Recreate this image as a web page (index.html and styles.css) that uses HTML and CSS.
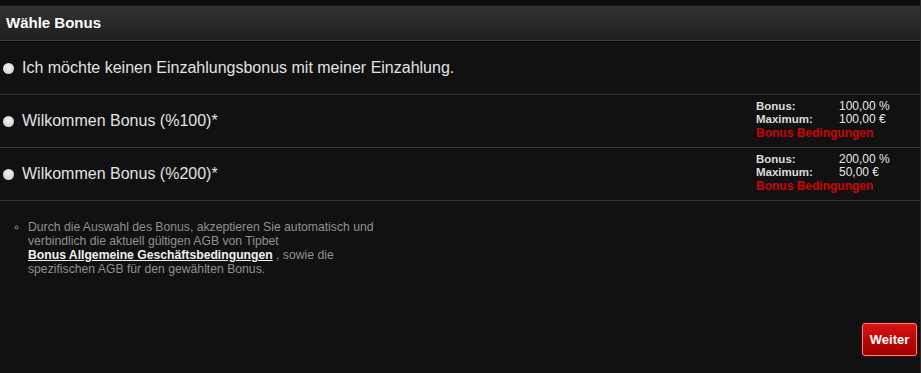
FILE: index.html
```html
<!DOCTYPE html>
<html lang="de">
<head>
<meta charset="utf-8">
<link rel="stylesheet" href="styles.css">
</head>
<body>
<div class="page">
  <div class="topband"></div>
  <div class="header">Wähle Bonus</div>
  <div class="options">
    <div class="row row-first">
      <span class="radio"></span>
      <span class="label">Ich möchte keinen Einzahlungsbonus mit meiner Einzahlung.</span>
    </div>
    <div class="row">
      <span class="radio"></span>
      <span class="label">Wilkommen Bonus (%100)*</span>
      <div class="info">
        <div class="info-line"><span class="k">Bonus:</span><span class="v">100,00 %</span></div>
        <div class="info-line"><span class="k">Maximum:</span><span class="v">100,00 €</span></div>
        <div class="terms">Bonus Bedingungen</div>
      </div>
    </div>
    <div class="row">
      <span class="radio"></span>
      <span class="label">Wilkommen Bonus (%200)*</span>
      <div class="info">
        <div class="info-line"><span class="k">Bonus:</span><span class="v">200,00 %</span></div>
        <div class="info-line"><span class="k">Maximum:</span><span class="v">50,00 €</span></div>
        <div class="terms">Bonus Bedingungen</div>
      </div>
    </div>
  </div>
  <ul class="notes">
    <li>Durch die Auswahl des Bonus, akzeptieren Sie automatisch und<br>verbindlich die aktuell gültigen AGB von Tipbet<br><a href="#" class="agb">Bonus Allgemeine Geschäftsbedingungen</a> , sowie die<br>spezifischen AGB für den gewählten Bonus.</li>
  </ul>
  <div class="actions">
    <button class="btn">Weiter</button>
  </div>
</div>
</body>
</html>
```

FILE: styles.css
```css
html, body {
  margin: 0;
  padding: 0;
  background: #111111;
}
body {
  font-family: Arial, "Liberation Sans", sans-serif;
  width: 921px;
  height: 373px;
  overflow: hidden;
}
.page {
  background: #111111;
  height: 373px;
  border-right: 1px solid #2a2a2a;
  box-sizing: border-box;
}
.topband {
  height: 5px;
  background: #0c0c0c;
  border-bottom: 1px solid #1a1a1a;
}
.header {
  height: 35px;
  box-sizing: border-box;
  background: linear-gradient(#343434, #1e1e1e);
  border-bottom: 1px solid #3c3c3c;
  color: #ffffff;
  font-weight: bold;
  font-size: 15px;
  line-height: 34px;
  padding-left: 6px;
}
.options {
  border-top: 1px solid #0a0a0a;
}
.row {
  display: flex;
  align-items: center;
  height: 53px;
  box-sizing: border-box;
  border-bottom: 1px solid #333333;
}
.radio {
  width: 11px;
  height: 11px;
  border-radius: 50%;
  background: radial-gradient(circle at 50% 40%, #f4f4f4, #c8c8c8);
  margin-left: 3px;
  margin-right: 8px;
  flex: none;
}
.label {
  color: #e2e2e2;
  font-size: 16px;
}
.info {
  margin-left: auto;
  width: 164px;
  align-self: flex-start;
  padding-top: 5px;
  font-size: 11.5px;
  font-weight: bold;
  line-height: 13px;
}
.info-line {
  display: flex;
  color: #dcdcdc;
}
.k {
  width: 83px;
}
.v {
  font-weight: normal;
  font-size: 12px;
  color: #e6e6e6;
}
.terms {
  color: #cc0000;
  margin-top: 1px;
  font-size: 12px;
}
.notes {
  margin: 19px 0 0 0;
  padding: 0 0 0 28px;
  list-style: circle;
  color: #909090;
  font-size: 12.2px;
  line-height: 14px;
}
.notes li::marker {
  color: #909090;
  font-size: 10px;
}
.agb {
  color: #f0f0f0;
  font-weight: bold;
  text-decoration: underline;
}
.actions {
  display: flex;
  justify-content: flex-end;
  padding-right: 3px;
  margin-top: 47px;
}
.btn {
  width: 55px;
  height: 33px;
  border: 1px solid #e08a8a;
  border-radius: 3px;
  background: linear-gradient(#d71515 0%, #c00808 45%, #a00000 100%);
  color: #ffffff;
  font-family: Arial, "Liberation Sans", sans-serif;
  font-weight: bold;
  font-size: 13px;
  padding: 0;
  box-shadow: 0 0 0 1px #5a0000;
}
```
